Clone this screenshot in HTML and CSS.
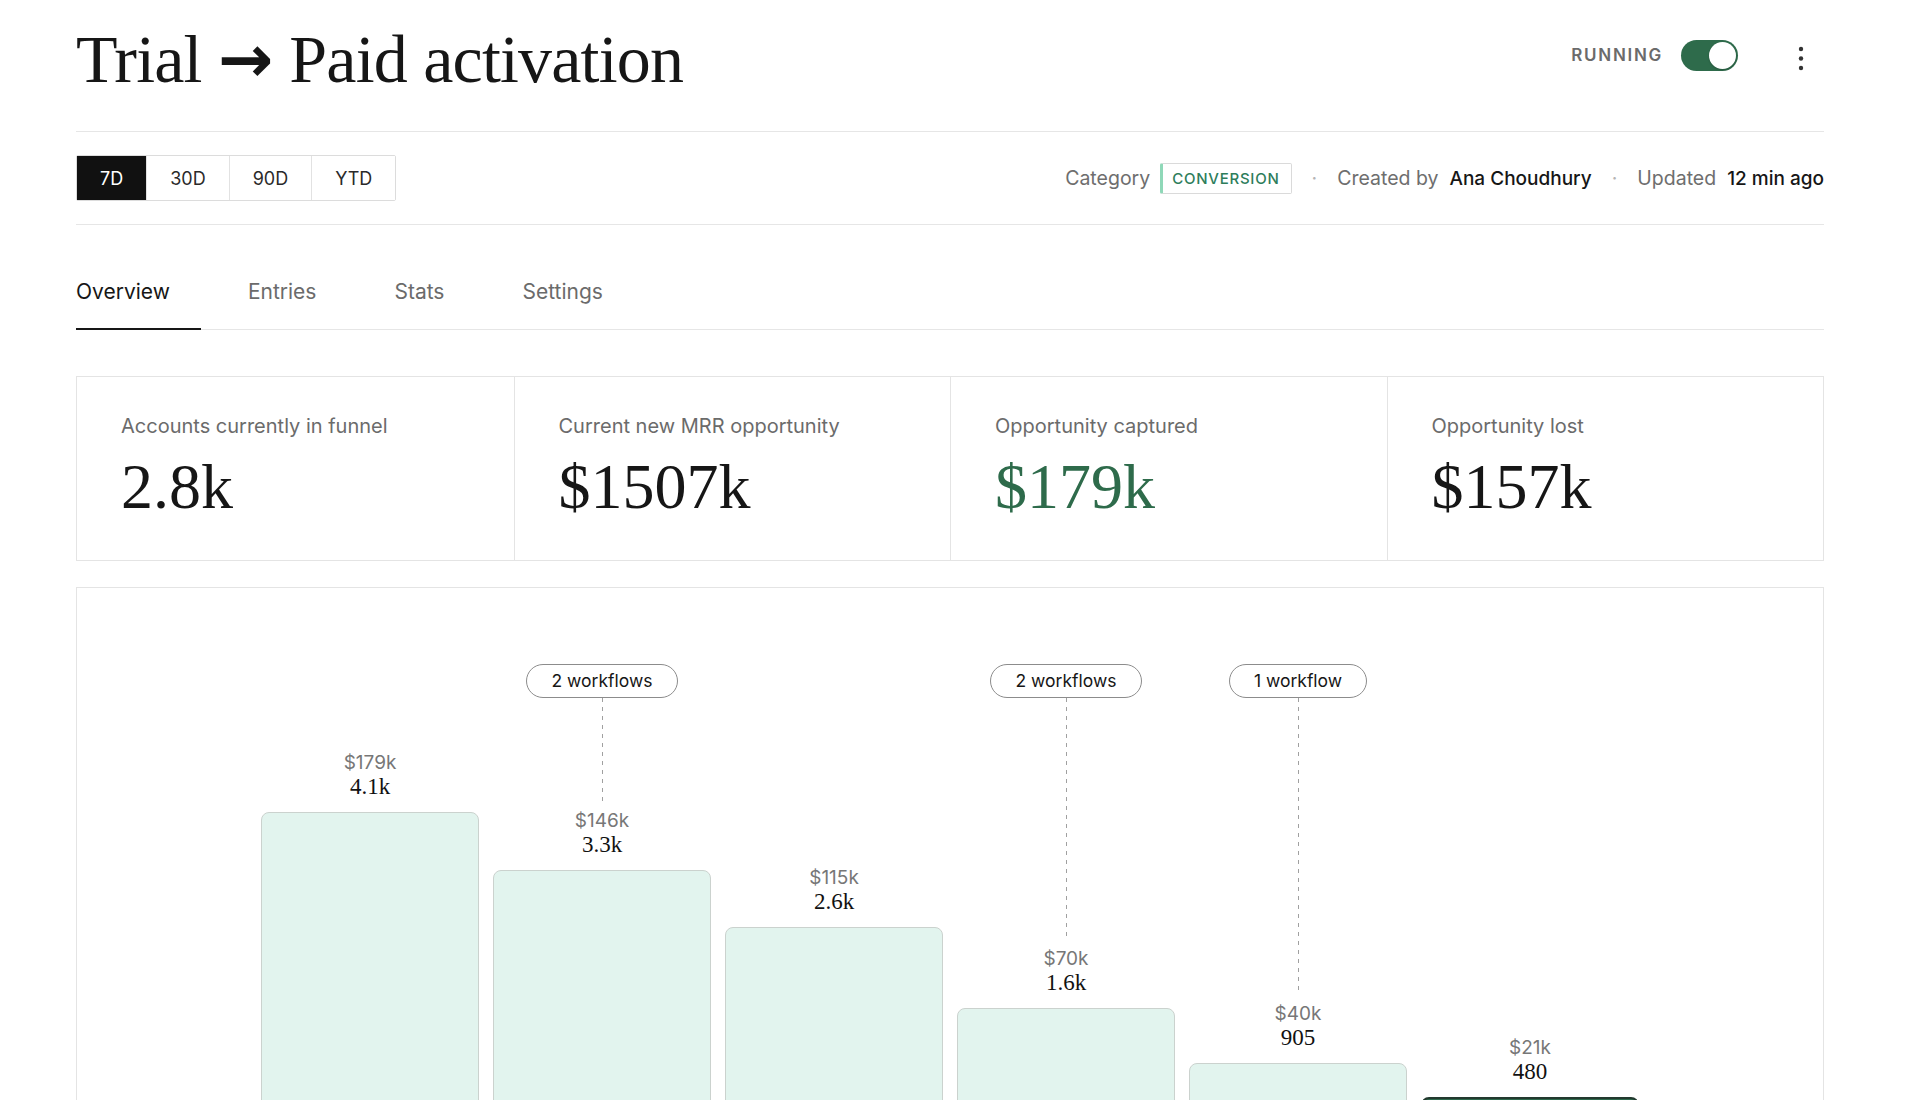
FILE: index.html
```html
<html>

<head>
	<title>Trial → Paid activation</title>

	<link rel="stylesheet" href="styles.css">
</head>

<body>
	<div class="page">
		<header class="head">
			<h1 class="title">Trial <span class="arrow">→</span> Paid activation</h1>
			<div class="status">
				<span class="status-label">RUNNING</span>
				<span class="switch"><span class="knob"></span></span>
				<button class="kebab" aria-label="More">
					<svg width="6" height="30" viewBox="0 0 6 30">
						<circle cx="3" cy="5" r="2.2" fill="#333"/>
						<circle cx="3" cy="14.5" r="2.2" fill="#333"/>
						<circle cx="3" cy="24" r="2.2" fill="#333"/>
					</svg>
				</button>
			</div>
		</header>

		<div class="toolbar">
			<div class="range">
				<button class="range-btn active">7D</button>
				<button class="range-btn">30D</button>
				<button class="range-btn">90D</button>
				<button class="range-btn">YTD</button>
			</div>
			<div class="meta">
				<span class="meta-label cat">Category</span>
				<span class="badge">CONVERSION</span>
				<span class="sep">·</span>
				<span class="meta-label">Created by</span>
				<span class="meta-value">Ana Choudhury</span>
				<span class="sep">·</span>
				<span class="meta-label">Updated</span>
				<span class="meta-value">12 min ago</span>
			</div>
		</div>

		<nav class="tabs">
			<a class="tab active">Overview</a>
			<a class="tab">Entries</a>
			<a class="tab">Stats</a>
			<a class="tab">Settings</a>
		</nav>

		<section class="kpis">
			<div class="kpi">
				<div class="kpi-label">Accounts currently in funnel</div>
				<div class="kpi-value">2.8k</div>
			</div>
			<div class="kpi">
				<div class="kpi-label">Current new MRR opportunity</div>
				<div class="kpi-value">$1507k</div>
			</div>
			<div class="kpi">
				<div class="kpi-label">Opportunity captured</div>
				<div class="kpi-value green">$179k</div>
			</div>
			<div class="kpi">
				<div class="kpi-label">Opportunity lost</div>
				<div class="kpi-value">$157k</div>
			</div>
		</section>

		<section class="chart">
			<div class="funnel">
				<div class="step">
					<div class="spacer"></div>
					<div class="amount">$179k</div>
					<div class="count">4.1k</div>
					<div class="bar" style="height: 320px"></div>
				</div>
				<div class="step">
					<div class="pill">2 workflows</div>
					<div class="link"></div>
					<div class="amount">$146k</div>
					<div class="count">3.3k</div>
					<div class="bar" style="height: 262px"></div>
				</div>
				<div class="step">
					<div class="spacer"></div>
					<div class="amount">$115k</div>
					<div class="count">2.6k</div>
					<div class="bar" style="height: 205px"></div>
				</div>
				<div class="step">
					<div class="pill">2 workflows</div>
					<div class="link"></div>
					<div class="amount">$70k</div>
					<div class="count">1.6k</div>
					<div class="bar" style="height: 124px"></div>
				</div>
				<div class="step">
					<div class="pill">1 workflow</div>
					<div class="link"></div>
					<div class="amount">$40k</div>
					<div class="count">905</div>
					<div class="bar" style="height: 69px"></div>
				</div>
				<div class="step">
					<div class="spacer"></div>
					<div class="amount">$21k</div>
					<div class="count">480</div>
					<div class="bar last" style="height: 35px"></div>
				</div>
			</div>
		</section>
	</div>
</body>

</html>
```

FILE: styles.css
```css
body {
	margin: 0;
	background-color: #ffffff;
	color: #161616;
	font-family: "Inter", "Liberation Sans", sans-serif;
}

.page {
	padding: 25px 96px 0 76px;
}

/* header */

.head {
	display: flex;
	justify-content: space-between;
	align-items: flex-start;
	padding-bottom: 38px;
	border-bottom: 1px solid #e6e6e6;
}

.title {
	margin: 0;
	font-family: "Liberation Serif", serif;
	font-weight: 400;
	font-size: 68px;
	line-height: 1;
	letter-spacing: -0.012em;
	color: #161616;
	white-space: nowrap;
}

.arrow {
	font-family: "DejaVu Sans", sans-serif;
	font-weight: 700;
	font-size: 66px;
	letter-spacing: 0;
}

.status {
	display: flex;
	align-items: flex-start;
	margin-top: 15px;
}

.status-label {
	font-size: 17px;
	line-height: 31px;
	font-weight: 600;
	letter-spacing: 0.1em;
	color: #6b6b6b;
	margin-right: 18px;
}

.switch {
	display: flex;
	justify-content: flex-end;
	align-items: center;
	box-sizing: border-box;
	width: 57px;
	height: 31px;
	padding: 0 2px;
	border-radius: 16px;
	background-color: #2e6b4b;
}

.knob {
	width: 27px;
	height: 27px;
	border-radius: 50%;
	background-color: #ffffff;
	box-shadow: 0 1px 2px rgba(0, 0, 0, 0.2);
}

.kebab {
	display: flex;
	align-items: center;
	justify-content: center;
	width: 46px;
	height: 31px;
	margin-left: 40px;
	margin-top: 3px;
	padding: 0;
	border: 0;
	background: transparent;
}

/* range + meta */

.toolbar {
	display: flex;
	justify-content: space-between;
	align-items: center;
	padding: 23px 0;
	border-bottom: 1px solid #e6e6e6;
}

.range {
	display: flex;
	border: 1px solid #dcdcdc;
	border-radius: 2px;
}

.range-btn {
	height: 44px;
	padding: 0 23px;
	border: 0;
	border-left: 1px solid #e2e2e2;
	background-color: #ffffff;
	font-family: "Inter", sans-serif;
	font-size: 18px;
	color: #2a2a2a;
}

.range-btn:first-child {
	border-left: 0;
}

.range-btn.active {
	background-color: #111111;
	color: #ffffff;
}

.meta {
	display: flex;
	align-items: center;
	font-size: 19.5px;
}

.meta-label {
	color: #6e6e6e;
	margin-right: 11px;
}

.meta-label.cat {
	margin-right: 10px;
}

.meta-value {
	color: #161616;
	font-size: 19px;
	font-weight: 500;
}

.badge {
	display: flex;
	align-items: center;
	height: 29px;
	padding: 0 11px 0 9px;
	border: 1px solid #dadada;
	border-left: 3px solid #8fd8b8;
	border-radius: 2px;
	font-size: 15px;
	font-weight: 500;
	letter-spacing: 0.05em;
	color: #2e7d5b;
}

.sep {
	color: #b5b5b5;
	margin: 0 20px;
}

/* tabs */

.tabs {
	display: flex;
	padding-top: 54px;
	border-bottom: 1px solid #e6e6e6;
}

.tab {
	padding: 0 31px 24px 0;
	margin-right: 47px;
	margin-bottom: -1px;
	border-bottom: 2px solid transparent;
	font-size: 21px;
	line-height: 25px;
	color: #6b6b6b;
}

.tab.active {
	color: #161616;
	border-bottom-color: #161616;
}

/* kpi cards */

.kpis {
	display: grid;
	grid-template-columns: repeat(4, 1fr);
	margin-top: 46px;
	border: 1px solid #e4e4e4;
}

.kpi {
	padding: 37px 44px 41px;
	border-left: 1px solid #e4e4e4;
}

.kpi:first-child {
	border-left: 0;
}

.kpi-label {
	font-size: 20px;
	line-height: 24px;
	color: #6b6b6b;
}

.kpi-value {
	margin-top: 17px;
	font-family: "Liberation Serif", serif;
	font-size: 64px;
	line-height: 1;
	color: #161616;
}

.kpi-value.green {
	color: #2e6b4b;
}

/* funnel chart */

.chart {
	margin-top: 26px;
	padding: 76px 0 60px;
	border: 1px solid #e4e4e4;
}

.funnel {
	display: flex;
	justify-content: center;
}

.step {
	display: flex;
	flex-direction: column;
	align-items: center;
	width: 232px;
	height: 468px;
}

.spacer {
	flex: 1;
}

.pill {
	box-sizing: border-box;
	height: 34px;
	padding: 0 24px;
	border: 1px solid #8c8c8c;
	border-radius: 17px;
	font-size: 17.5px;
	line-height: 32px;
	color: #161616;
	white-space: nowrap;
}

.link {
	flex: 1;
	width: 1px;
	margin-bottom: 8px;
	background: repeating-linear-gradient(to bottom, #a0a0a0 0, #a0a0a0 4px, transparent 4px, transparent 9px);
}

.amount {
	font-size: 19px;
	line-height: 22px;
	color: #777777;
}

.count {
	margin-bottom: 12px;
	font-family: "Liberation Serif", serif;
	font-size: 23px;
	line-height: 26px;
	color: #111111;
}

.bar {
	box-sizing: border-box;
	width: 218px;
	border: 1px solid #cbd2ce;
	border-radius: 8px 8px 0 0;
	background-color: #e2f4ee;
}

.bar.last {
	border: 2px solid #22392e;
	background-color: #2f6b4f;
}
```
